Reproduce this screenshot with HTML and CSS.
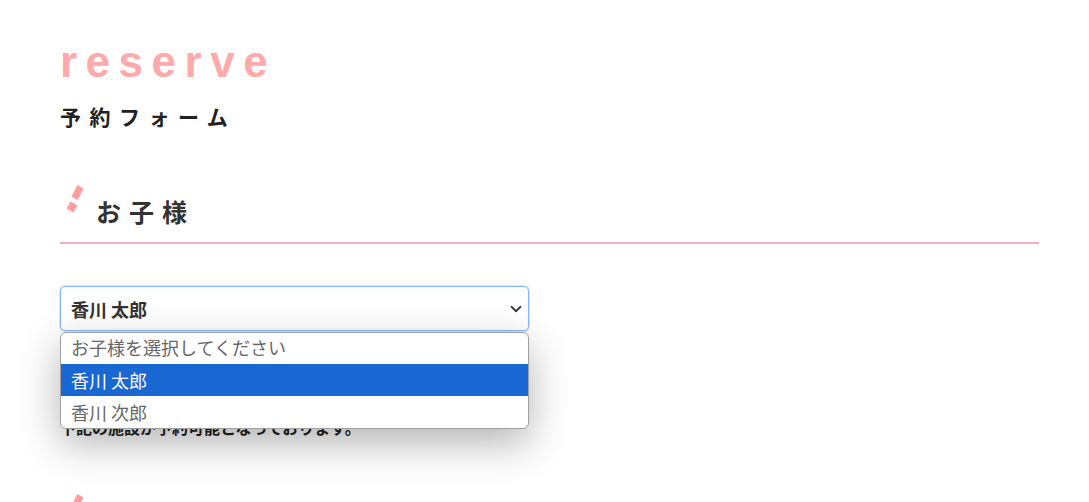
FILE: index.html
```html
<!DOCTYPE html>
<html lang="ja">
<head>
<meta charset="utf-8">
<title>reserve 予約フォーム</title>
<link rel="stylesheet" href="styles.css">
</head>
<body>
<div class="page">
  <header class="brand">
    <h1 class="logo">reserve</h1>
    <p class="subtitle">予約フォーム</p>
  </header>

  <section class="section">
    <h2 class="section-title"><span class="deco"><i class="d1"></i><i class="d2"></i></span>お子様</h2>
    <div class="field">
      <div class="select">
        <span class="select-value">香川 太郎</span>
        <svg class="chevron" width="12" height="12" viewBox="0 0 16 16"><path d="M2 5l6 6 6-6" fill="none" stroke="#343a40" stroke-width="2.4" stroke-linecap="round" stroke-linejoin="round"/></svg>
      </div>
      <ul class="options">
        <li class="option placeholder">お子様を選択してください</li>
        <li class="option active">香川 太郎</li>
        <li class="option">香川 次郎</li>
      </ul>
    </div>
    <p class="note">下記の施設が予約可能となっております。</p>
  </section>

  <section class="section section-next">
    <h2 class="section-title"><span class="deco"><i class="d1"></i><i class="d2"></i></span>施設</h2>
  </section>
</div>
</body>
</html>
```

FILE: styles.css
```css
* { box-sizing: border-box; }
html, body { margin: 0; padding: 0; background: #fff; }
body {
  font-family: "Noto Sans CJK JP", "Noto Sans", sans-serif;
  color: #333;
  overflow: hidden;
}
.page {
  padding: 30px 50px 0 60px;
}
.brand { margin: 0; }
.logo {
  margin: 0;
  font-family: "Liberation Sans", Arial, sans-serif;
  font-weight: 700;
  font-size: 44px;
  line-height: 64px;
  letter-spacing: 8.5px;
  color: #ffaaaa;
}
.subtitle {
  margin: 7px 0 0 0;
  font-size: 21px;
  line-height: 30px;
  font-weight: 700;
  letter-spacing: 8.5px;
  color: #222;
}
.section { margin-top: 48px; }
.section-title {
  position: relative;
  margin: 0;
  padding: 15px 0 14px 36px;
  font-size: 25px;
  line-height: 34px;
  font-weight: 700;
  letter-spacing: 8px;
  color: #333;
  border-bottom: 2px solid #ebb3b7;
}
.deco {
  position: absolute;
  left: 6px;
  top: 6px;
  width: 20px;
  height: 30px;
}
.deco i {
  position: absolute;
  display: block;
  background: #ff9ea0;
  transform: rotate(28deg);
}
.deco .d1 { left: 8px; top: 1px; width: 7px; height: 13px; }
.deco .d2 { left: 2px; top: 18px; width: 8px; height: 8px; }

.field {
  position: relative;
  width: 469px;
  margin-top: 42px;
}
.select {
  display: flex;
  align-items: center;
  justify-content: space-between;
  height: 45px;
  padding: 0 6px 0 10px;
  border: 1px solid #86b7fe;
  border-radius: 5px;
  box-shadow: 0 0 0 1px rgba(134, 183, 254, 0.35);
  background: #fff;
}
.select-value {
  font-size: 18px;
  font-weight: 700;
  color: #333;
}
.options {
  position: absolute;
  left: 0;
  top: 46px;
  width: 469px;
  margin: 0;
  padding: 0;
  list-style: none;
  background: #fff;
  border: 1px solid #a0a0a0;
  border-radius: 6px;
  overflow: hidden;
  box-shadow: 0 14px 40px rgba(0, 0, 0, 0.3);
  z-index: 2;
}
.option {
  height: 32px;
  line-height: 32px;
  padding: 0 10px;
  font-size: 18px;
  color: #666;
}
.option.placeholder { height: 31px; line-height: 29px; }
.option.active { background: #1967d2; color: #fff; }
.note {
  margin: 86px 0 0 0;
  font-size: 16px;
  line-height: 20px;
  font-weight: 700;
  color: #222;
}
.section-next { margin-top: 51px; }
```
